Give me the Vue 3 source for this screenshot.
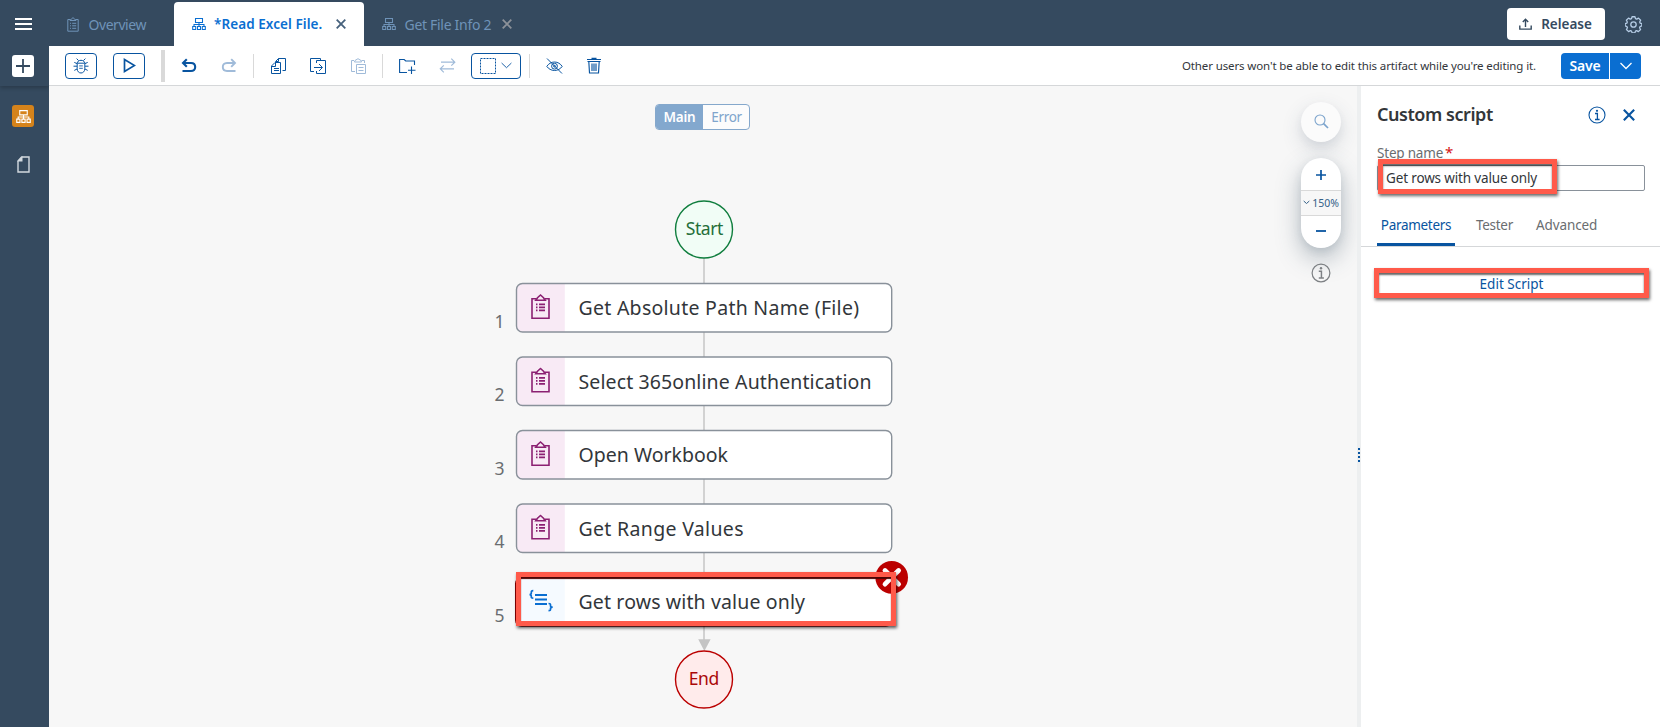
<script setup>
const steps = [
  { n: 1, label: 'Get Absolute Path Name (File)', y: 283.5, w: 280.5 },
  { n: 2, label: 'Select 365online Authentication', y: 357, w: 293 },
  { n: 3, label: 'Open Workbook', y: 430.5, w: 149.5 },
  { n: 4, label: 'Get Range Values', y: 504, w: 165 },
]
</script>

<template>
  <div class="app">
    <!-- Shared glyphs -->
    <svg class="defs" width="0" height="0">
      <symbol id="org" viewBox="0 0 14 14">
        <g fill="none" stroke="currentColor" stroke-width="1.05">
          <path d="M3.5 1.5h7v4h-7zM7 5.500v4M2 9.500v-2h10v2M.7 9.500h3v3h-3zM5.500 9.500h3v3h-3zM10.300 9.500h3v3h-3z" />
        </g>
      </symbol>
      <symbol id="clip" viewBox="0 0 20 26">
        <g fill="none" stroke="currentColor" stroke-width="1.6">
          <path d="M6 5H1.500v19.500h17V5H14" />
          <path d="M5.300 6.500 7 4l3-2.700L13 4l1.700 2.500z" />
          <path d="M5.500 10.700H7M8.500 10.700h6M5.500 13.700H7M8.500 13.700h6M5.500 16.700H7M8.500 16.700h6" />
        </g>
      </symbol>
      <symbol id="info" viewBox="0 0 18 18">
        <circle cx="9" cy="9" r="8" fill="none" stroke="currentColor" stroke-width="1.1" />
        <path d="M7 7.5h2.4v6M7 13.5h4.6" fill="none" stroke="currentColor" stroke-width="1.3" />
        <circle cx="9" cy="4.8" r="1.1" fill="currentColor" />
      </symbol>
      <symbol id="x" viewBox="0 0 10 10">
        <path d="M.7.7l8.6 8.6M9.3.7L.7 9.3" fill="none" stroke="currentColor" stroke-width="1.8" />
      </symbol>
    </svg>

    <aside class="side">
      <div class="side-top">
        <svg class="burger" width="17" height="14"><path d="M0 2h17M0 7h17M0 12h17" stroke="#fff" stroke-width="2" /></svg>
        <div class="tile white">
          <svg width="22" height="22"><path d="M11 4v14M4 11h14" stroke="#354a5f" stroke-width="1.8" /></svg>
        </div>
      </div>
      <div class="tile orange"><svg width="15" height="15"><use href="#org" /></svg></div>
      <svg class="doc" width="13" height="17">
        <path d="M4.6 1H12v15H1V5z" fill="none" stroke="#d3dae0" stroke-width="1.4" />
        <path d="M5.500 0v5.500H0z" fill="#d3dae0" />
      </svg>
    </aside>

    <div class="main">
      <header class="shell">
        <div class="tab first">
          <svg width="12" height="15" viewBox="0 0 12 15" fill="none" stroke="currentColor">
            <path d="M3.5 2.5H.8v11.7h10.4V2.5H8.5M3 3.5 4.3 2 6 .7 7.7 2 9 3.500zM3 6.300h1M5.200 6.300h4M3 8.800h1M5.200 8.800h4M3 11.300h1M5.200 11.300h4" />
          </svg>
          <span class="t-over">Overview</span>
        </div>
        <div class="tab active">
          <svg width="14" height="14"><use href="#org" /></svg>
          <span class="t-read">*Read Excel File.</span>
          <svg class="close" width="10" height="10"><use href="#x" /></svg>
        </div>
        <div class="tab last">
          <svg width="14" height="14"><use href="#org" /></svg>
          <span class="t-info">Get File Info 2</span>
          <svg class="close" width="10" height="10"><use href="#x" /></svg>
        </div>
        <div class="grow"></div>
        <button class="release">
          <svg width="13" height="12" viewBox="0 0 13 12" fill="none" stroke="#354a5f" stroke-width="1.4">
            <path d="M.8 7.500v3.600h11.400V7.500M6.500 9V1.500M3.800 4 6.500 1.200 9.200 4" />
          </svg>
          <span>Release</span>
        </button>
        <svg class="gear" width="17" height="17" viewBox="-8.5 -8.5 17 17" fill="none" stroke="#b6cde6" stroke-width="1.3" stroke-linejoin="round">
          <path d="M-1.500-7.700h3l.5 1.900 1.300.5 1.800-1 2.200 2.200-1 1.800.5 1.100 1.700.5v2.400l-1.800.6-.5 1.200 1 1.800-2.200 2.200-1.800-1-1.200.5-.6 1.800h-2.800l-.6-1.800-1.200-.5-1.800 1-2.200-2.200 1-1.800-.5-1.200-1.800-.6v-2.400l1.700-.5.5-1.100-1-1.800 2.200-2.200 1.800 1 1.300-.5z" transform="translate(0 -.2) scale(.98)" />
          <circle r="2.700" />
        </svg>
      </header>

      <div class="toolbar">
        <button class="tb bug">
          <svg width="16" height="16" viewBox="0 0 16 16" fill="none" stroke="#0854a0">
            <path d="M4.2 5.6C4.2 3.4 6 2.3 8 2.3s3.8 1.1 3.8 3.3v5.2c0 2.600-1.800 4.200-3.800 4.200s-3.800-1.600-3.800-4.200zM3.600.6l2 2M12.400.6l-2 2M4 5.600 1.300 4.400M12 5.600l2.700-1.200M.5 8.200H4M12 8.200h3.500M4 11l-2.700 1.400M12 11l2.700 1.400M4.300 5.200h7.400" />
            <path d="M6.200 7.800h3.600M6.200 10.300h3.600" stroke-width="1.300" opacity=".7" />
          </svg>
        </button>
        <button class="tb play">
          <svg width="13" height="15"><path d="M1.500 1.600v11.800l10-5.900z" fill="none" stroke="#0854a0" stroke-width="1.700" /></svg>
        </button>
        <div class="bar"></div>
        <svg class="undo" width="16" height="15" viewBox="0 0 16 15" fill="none" stroke="#0854a0" stroke-width="2.100">
          <path d="M5.800 1.200 2 5l3.800 3.800M2.200 5H10c3 0 4.200 1.900 4.200 4.100S12.600 13 10 13H1.500" />
        </svg>
        <svg class="redo" width="16" height="15" viewBox="0 0 16 15" fill="none" stroke="#a0bbd9" stroke-width="1.900">
          <path d="M10.200 1.200 14 5l-3.800 3.800M13.800 5H6C3 5 1.800 6.900 1.800 9.100S3.400 13 6 13h8.500" />
        </svg>
        <div class="sep s1"></div>
        <svg class="copy" width="15" height="16" viewBox="0 0 15 16" fill="none" stroke="#0854a0">
          <path d="M4 4.500h5.500v11h-9V8zM4.500 4.500v4H1M4.500 4.500v-1l3-3h7v12h-3M7.500.5v3H5M3 10.500h5M3 12.500h5" />
        </svg>
        <svg class="pastein" width="17" height="16" viewBox="0 0 17 16" fill="none" stroke="#0854a0">
          <path d="M4 13.500H.5V.5h10v2M6.500 5V2.500h9v13h-9V13M4 9.500h8M9 6l3.500 3.500L9 13" />
        </svg>
        <svg class="paste" width="15" height="16" viewBox="0 0 15 16" fill="none" stroke="#a0bbd9">
          <path d="M4 13.500H.5v-11H3M10.500 2.500h3V5M3.500 4l.5-1.500L7 .7l3 1.800.5 1.500zM5.500 6.500h9v9h-9zM7.500 9.500h5M7.500 12.500h5" />
        </svg>
        <div class="sep s2"></div>
        <svg class="folder" width="17" height="16" viewBox="0 0 17 16" fill="none" stroke="#0854a0" stroke-width="1.100">
          <path d="M8 14.500H.6v-13h4.600l1.500 1.500h8.800V7M12.500 8.500v7.500M9 12.300h7.500" />
        </svg>
        <svg class="swap" width="17" height="15" viewBox="0 0 17 15" fill="none" stroke="#a0bbd9" stroke-width="1.200">
          <path d="M2 4.200h13.600M12.300.7l3.500 3.500-3.500 3.400M15 10.800H1.400M4.800 7.400l-3.500 3.400 3.500 3.500" />
        </svg>
        <button class="tb select">
          <svg width="16" height="16"><rect x=".5" y=".5" width="15" height="15" fill="none" stroke="#0854a0" stroke-dasharray="2 1" /></svg>
          <svg width="11" height="7"><path d="M.6 1 5.500 5.700 10.400 1" fill="none" stroke="#0854a0" stroke-width=".9" /></svg>
        </button>
        <div class="sep s3"></div>
        <svg class="eye" width="17" height="16" viewBox="0 0 17 16" fill="none" stroke="#0854a0">
          <path d="M.8 8.400C2.500 5.800 5.200 4 8.500 4s6 1.800 7.700 4.400c-1.700 2.400-4.400 4.100-7.700 4.100S2.500 10.800.8 8.400zM1 .5l15 15" />
          <circle cx="8.500" cy="8.200" r="2.900" /><circle cx="8.500" cy="8.200" r=".9" />
        </svg>
        <svg class="trash" width="14" height="17" viewBox="0 0 14 17" fill="none" stroke="#0854a0" stroke-width="1.150">
          <path d="M0 2.500h14M4.500 1.300h5M.5 4.500h13M1.800 4.500l.7 11.500h9l.7-11.500M5 6.500v7.500M7 6.500v7.500M9 6.500v7.500" />
        </svg>
        <div class="grow"></div>
        <span class="notice">Other users won't be able to edit this artifact while you're editing it.</span>
        <button class="save"><span>Save</span></button>
        <button class="save-more"><svg width="14" height="8"><path d="M1.500 1 7 6.500 12.500 1" fill="none" stroke="#fff" stroke-width="1.300" /></svg></button>
      </div>

      <div class="work">
        <div class="canvas">
          <svg class="flow" width="1308" height="641" viewBox="49 86 1308 641">
            <path d="M704 258V640" stroke="#c8c8c8" stroke-width="1.600" />
            <path d="M698.200 639.300h12.400L704.400 651z" fill="#c4c4c4" />
            <circle cx="704" cy="229.500" r="28.500" fill="#f1fdf6" stroke="#107e3e" stroke-width="1.400" />
            <text x="685.800" y="235" textLength="37.500" class="cap" fill="#256f3a">Start</text>
            <g v-for="s in steps" :key="s.n">
              <rect x="516.500" :y="s.y" width="375.200" height="48.500" rx="6" fill="#fff" />
              <path :d="`M564.800 ${s.y}V${s.y + 48.5}H522.500a6 6 0 0 1 -6 -6V${s.y + 6}a6 6 0 0 1 6 -6z`" fill="#f8eaf5" />
              <rect x="516.500" :y="s.y" width="375.200" height="48.500" rx="6" fill="none" stroke="#89919a" stroke-width="1.400" />
              <svg x="530.500" :y="s.y + 10.2" width="20" height="26" class="plum"><use href="#clip" /></svg>
              <text x="578.500" :y="s.y + 31.5" :textLength="s.w" class="lbl">{{ s.label }}</text>
              <text x="504.500" :y="s.y + 44.2" class="num">{{ s.n }}</text>
            </g>
            <rect x="515.800" y="577.500" width="376" height="48.500" rx="6" fill="#fff" stroke="#8a0000" stroke-width="1.600" />
            <rect x="520" y="579" width="44.800" height="44" fill="#f5faff" />
            <g fill="none" stroke="#0a6ed1" stroke-width="2">
              <path d="M535 595h12M535 599.500h12M535 604h12" />
              <path d="M533.300 590.700c-2.200 0-2 .9-2 2.300 0 1.200-.4 1.600-1.800 1.600 1.400 0 1.800.4 1.800 1.600 0 1.400-.2 2 2 2" stroke-width="1.700" />
              <path d="M548.500 603.500c2.200 0 2 .8 2 2.200 0 1.200.5 1.500 2.200 1.500-1.700 0-2.200.4-2.200 1.500 0 1.300.2 2-2 2" stroke-width="1.700" />
            </g>
            <text x="578.500" y="609" textLength="226.500" class="lbl">Get rows with value only</text>
            <text x="504.500" y="621.700" class="num">5</text>
            <circle cx="891.700" cy="577.400" r="16.300" fill="#bb0000" />
            <path d="M885 570.500l13.600 13.600M898.600 570.500L885 584.100" stroke="#fff" stroke-width="4.800" stroke-linecap="round" />
            <circle cx="704" cy="679.500" r="28.500" fill="#ffebeb" stroke="#bb0000" stroke-width="1.400" />
            <text x="688.800" y="685" textLength="30.500" class="cap" fill="#aa0808">End</text>
          </svg>
          <div class="mark mark-step"></div>

          <div class="toggle"><span class="on">Main</span><span class="off">Error</span></div>

          <div class="controls">
            <div class="search">
              <svg width="15" height="15" fill="none" stroke="#7ba3cc" stroke-width="1.100"><circle cx="6" cy="6" r="5" /><path d="M9.600 9.600 14 14" stroke-width="1.700" /></svg>
            </div>
            <div class="zoom">
              <div class="z-btn"><svg width="12" height="12"><path d="M6 1v10M1 6h10" stroke="#0854a0" stroke-width="1.700" /></svg></div>
              <div class="z-val"><svg width="7" height="5"><path d="M.7 1 3.500 3.500 6.300 1" fill="none" stroke="#346187" /></svg><span>150%</span></div>
              <div class="z-btn low"><svg width="12" height="12"><path d="M1 6h10" stroke="#0854a0" stroke-width="1.800" /></svg></div>
            </div>
            <svg class="c-info" width="20" height="20"><use href="#info" /></svg>
          </div>
        </div>

        <div class="splitter"><i v-for="i in 4" :key="i"></i></div>

        <section class="panel">
          <div class="p-head">
            <h2>Custom script</h2>
            <svg class="p-info" width="18" height="18"><use href="#info" /></svg>
            <svg class="p-x" width="12" height="12"><use href="#x" /></svg>
          </div>
          <label class="name">Step name<b>*</b></label>
          <div class="field"><span>Get rows with value only</span><div class="mark mark-name"></div></div>
          <nav class="ptabs">
            <span class="cur">Parameters</span><span class="tester">Tester</span><span class="adv">Advanced</span>
          </nav>
          <div class="edit"><span>Edit Script</span><div class="mark mark-edit"></div></div>
        </section>
      </div>
    </div>
  </div>
</template>

<style>
body { margin: 0; overflow: hidden; }
</style>

<style scoped>
* { box-sizing: border-box; }
.app { width: 1660px; height: 727px; display: flex; overflow: hidden; font-family: "Noto Sans", "Open Sans", sans-serif; font-size: 14px; color: #32363a; background: #f7f7f7; }
.defs { position: absolute; }
button { margin: 0; padding: 0; font: inherit; display: flex; align-items: center; justify-content: center; }
svg { display: block; flex: none; }
span { white-space: nowrap; }
.grow { flex: 1; }

.side { width: 49px; flex: none; background: #354a5f; display: flex; flex-direction: column; align-items: flex-start; }
.side-top { width: 49px; height: 86px; padding: 17px 0 0 12px; box-shadow: 0 2px 4px rgba(0, 0, 0, .22); }
.burger { margin: 0 0 24px 3px; }
.tile { width: 22px; height: 22px; border-radius: 3px; display: flex; align-items: center; justify-content: center; }
.white { background: #fff; }
.orange { margin: 19px 0 0 12px; background: #d5831b; color: #fff; }
.doc { margin: 29px 0 0 17px; }

.main { width: 1611px; display: flex; flex-direction: column; }
.shell { height: 46px; flex: none; background: #354a5f; display: flex; align-items: center; }
.tab { height: 46px; display: flex; align-items: center; color: #6f93b8; padding-top: 2px; }
.first { width: 125px; padding-left: 18px; }
.first span { margin-left: 9.5px; }
.active { width: 190px; height: 44px; margin-top: 2px; padding: 0 0 0 18px; background: #fff; border-radius: 4px 4px 0 0; color: #0a6ed1; }
.active span { margin-left: 8px; font-weight: 600; width: 110px; font-size: 13.5px; }
.active .close { margin-left: 12px; color: #46617c; }
.last { padding-left: 18px; }
.last span { margin-left: 8.5px; width: 86px; }
.last .close { margin-left: 11.5px; color: #8d9299; }
.t-over { letter-spacing: -.45px; }
.t-read { letter-spacing: .07px; }
.t-info { letter-spacing: -.3px; }
.release { width: 98px; height: 32px; margin: 2px 20px 0 0; background: #fff; border: 0; border-radius: 4px; color: #354a5f; font-weight: 600; font-size: 13.5px; }
.release span { margin-left: 9px; letter-spacing: 0; }
.gear { margin: 2px 18.5px 0 0; }

.toolbar { height: 40px; flex: none; background: #fff; border-bottom: 1px solid #d5d7d9; display: flex; align-items: center; }
.tb { height: 26px; background: #fff; border: 1px solid #0854a0; border-radius: 4px; }
.bug { width: 32px; margin-left: 16px; }
.play { width: 32px; margin-left: 16px; }
.bar { width: 4px; height: 32px; margin-left: 16px; background: #d9d9d9; }
.undo { margin-left: 16px; }
.redo { margin-left: 24px; }
.sep { width: 1px; height: 24px; background: #d9d9d9; }
.s1 { margin-left: 16px; }
.copy { margin: 1px 0 0 17px; }
.pastein { margin: 1px 0 0 24px; }
.paste { margin: 1px 0 0 24px; }
.s2 { margin-left: 16px; }
.folder { margin-left: 16px; }
.swap { margin-left: 23px; }
.select { width: 50px; margin-left: 15px; gap: 5px; }
.s3 { margin-left: 8px; }
.eye { margin-left: 16px; }
.trash { margin-left: 24px; }
.notice { font-size: 11.5px; letter-spacing: -.12px; margin-right: 25px; }
.save { width: 48px; height: 26px; border: 0; background: #0a6ed1; color: #fff; border-radius: 4px 0 0 4px; font-weight: 600; letter-spacing: -.2px; }
.save-more { width: 31px; height: 26px; margin: 0 19px 0 1px; border: 0; background: #0a6ed1; border-radius: 0 4px 4px 0; }

.work { flex: 1; display: flex; }
.canvas { position: relative; width: 1308px; height: 641px; background: #f7f7f7; overflow: hidden; }
.lbl { font-size: 19.5px; fill: #32363a; }
.cap { font-size: 17.5px; }
.num { font-size: 17.5px; fill: #6a6d70; text-anchor: end; }
.plum { color: #8b2072; }
.mark { position: absolute; border: 5px solid #ff5a4a; box-shadow: 1px 2px 3px rgba(0, 0, 0, .6), inset 0 2px 2px rgba(0, 0, 0, .6); pointer-events: none; }
.mark-step { left: 467px; top: 486px; width: 380px; height: 54px; box-shadow: 1px 2px 3px rgba(0, 0, 0, .65), inset 0 2px 1px #4d0505; }
.toggle { position: absolute; left: 606px; top: 18px; width: 95px; height: 26px; display: flex; border: 1px solid #85a8cc; border-radius: 4px; overflow: hidden; line-height: 25px; text-align: center; background: #fcfcfc; font-size: 13.5px; }
.toggle .on { width: 47px; background: #83a8ce; color: #fff; font-weight: 600; letter-spacing: -.2px; }
.toggle .off { flex: 1; color: #80a5cc; letter-spacing: -.3px; padding-left: 1px; }
.controls { position: absolute; left: 1252px; top: 16px; width: 40px; display: flex; flex-direction: column; align-items: center; }
.search { width: 40px; height: 40px; border-radius: 50%; background: #fbfbfb; display: flex; align-items: center; justify-content: center; padding-bottom: 2px; box-shadow: 0 8px 20px rgba(53, 74, 95, .17), 0 4px 8px rgba(53, 74, 95, .06); }
.zoom { width: 40px; height: 90px; margin-top: 16px; border-radius: 20px; background: #fff; box-shadow: 0 10px 24px rgba(53, 74, 95, .35), 0 3px 8px rgba(53, 74, 95, .1); }
.z-btn { height: 32px; display: flex; align-items: center; justify-content: center; padding-top: 2px; }
.low { padding: 0 0 2px; }
.z-val { height: 26px; background: #f7f7f7; border: solid #d9d9d9; border-width: 1px 0; display: flex; align-items: center; justify-content: center; gap: 2px; font-size: 10.5px; color: #346187; padding-bottom: 1px; }
.c-info { margin-top: 15px; color: #7d8084; }

.splitter { width: 4px; background: #edeff0; display: flex; flex-direction: column; gap: 2px; padding: 362px 0 0 1px; }
.splitter i { width: 2px; height: 2px; background: #0854a0; }

.panel { width: 299px; background: #fff; }
.p-head { height: 58px; display: flex; align-items: center; padding-left: 16px; }
h2 { margin: -2px 0 0; width: 211px; font-size: 18px; font-weight: 600; line-height: 24px; letter-spacing: -.45px; white-space: nowrap; }
.p-info { color: #0854a0; }
.p-x { margin-left: 17px; color: #0854a0; }
.name { display: block; height: 21px; margin-left: 16px; line-height: 17px; color: #6a6d70; font-size: 13.5px; letter-spacing: -.2px; }
.name b { color: #d41414; margin-left: 2px; font-size: 15px; font-weight: 400; }
.field { position: relative; width: 268px; height: 26px; margin-left: 16px; border: 1px solid #89919a; border-radius: 2px; padding-left: 8px; line-height: 25px; font-size: 13.5px; letter-spacing: -.15px; }
.mark-name { left: 0; top: -7px; width: 179px; height: 35px; }
.ptabs { height: 56px; border-bottom: 1px solid #d5d7d9; display: flex; padding-left: 16px; font-size: 13.5px; color: #6a6d70; line-height: 68px; letter-spacing: -.1px; }
.cur { width: 78px; height: 55px; color: #0854a0; text-align: center; border-bottom: 3px solid #0854a0; border-radius: 2px 2px 0 0; letter-spacing: -.3px; }
.tester { margin-left: 21px; width: 60px; letter-spacing: -.3px; }
.edit { position: relative; width: 275px; height: 30px; margin: 21px 0 0 13px; text-align: center; line-height: 33px; color: #0854a0; font-size: 13.5px; }
.mark-edit { inset: 0; }
</style>
